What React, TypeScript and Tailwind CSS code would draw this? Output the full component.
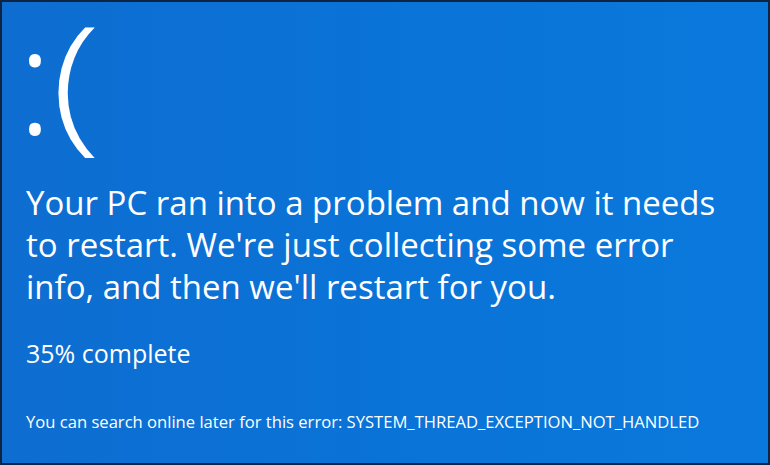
export default function App() {
  return (
    <div
      className="w-[770px] h-[465px] overflow-hidden border-2 border-[#0f2342] bg-gradient-to-r from-[#0e6dd1] via-[#0a73d7] to-[#0a79dd] text-white"
      style={{ fontFamily: '"Open Sans", "Noto Sans", sans-serif' }}
    >
      <div className="pl-[24px]">
        <div className="h-[170px] text-[150px] leading-[148px] font-light whitespace-nowrap">
          <span className="-ml-[9px]">:</span>
          <span className="inline-block -ml-[2px] origin-left scale-x-[1.22]">(</span>
        </div>
        <p className="mt-[10px] w-[712px] text-[33px] leading-[42px]">
          Your PC ran into a problem and now it needs to restart. We're just collecting some error info, and then we'll restart for you.
        </p>
        <p className="mt-[30px] text-[25px] leading-[30px]">35% complete</p>
        <p className="mt-[44px] text-[16.6px] leading-[20px]">
          You can search online later for this error: SYSTEM_THREAD_EXCEPTION_NOT_HANDLED
        </p>
      </div>
    </div>
  );
}
